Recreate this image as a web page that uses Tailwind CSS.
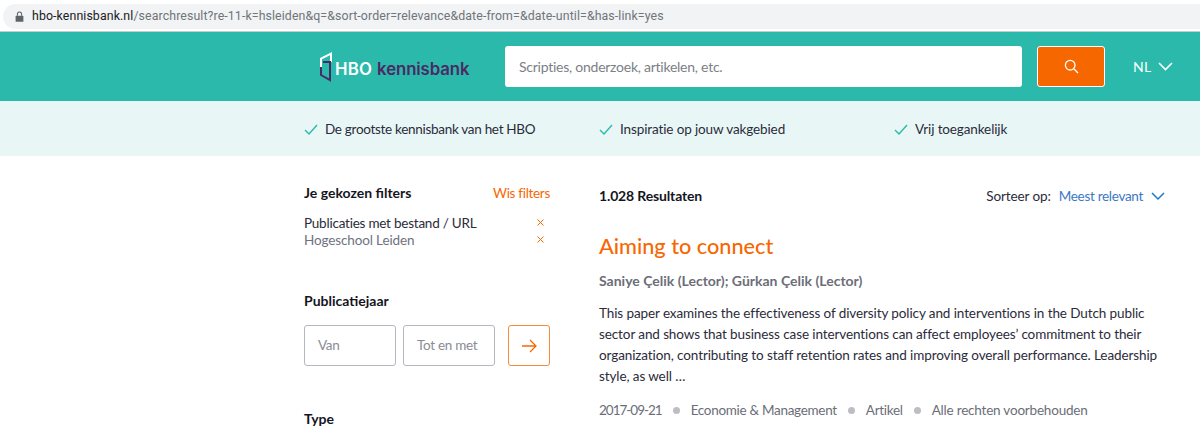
<!DOCTYPE html>
<html lang="nl">
<head>
  <meta charset="UTF-8">
  <title>HBO Kennisbank</title>
  <script src="https://cdn.jsdelivr.net/npm/@tailwindcss/browser@4"></script>
</head>
<body class="h-[440px] overflow-hidden bg-white font-['Lato',sans-serif] text-[13.5px] tracking-[-0.3px] text-[#2b2b3a]">

  <!-- Browser bar -->
  <div class="h-[32px] border-b border-[#c9cbcd] bg-white pl-[3px] pt-[4px]">
    <div class="flex h-[25px] items-center rounded-l-full bg-[#f1f3f4] pl-[11px] font-['Roboto',sans-serif] text-[12.35px] tracking-[0.1px]">
      <svg class="mr-[7px] h-[11px] w-[11px]" viewBox="0 0 13 13" fill="#5f6368">
        <path d="M2.5 5.5h8a.6.6 0 0 1 .6.6v6a.6.6 0 0 1-.6.6h-8a.6.6 0 0 1-.6-.6v-6a.6.6 0 0 1 .6-.6z"/>
        <path d="M4 5.5V3.6a2.5 2.5 0 0 1 5 0v1.9" fill="none" stroke="#5f6368" stroke-width="1.2"/>
      </svg>
      <span class="text-[#202124]">hbo-kennisbank.nl</span><span class="text-[#70757a]">/searchresult?re-11-k=hsleiden&amp;q=&amp;sort-order=relevance&amp;date-from=&amp;date-until=&amp;has-link=yes</span>
    </div>
  </div>

  <!-- Header -->
  <header class="flex h-[69px] items-center bg-[#2bb9ac] pl-[319px]">
    <div class="flex w-[186px] items-center">
      <svg class="h-[31px] w-[16px] shrink-0" viewBox="0 0 16 31" fill="none">
        <path d="M12 11V2.5L2 7.5V17" stroke="#fff" stroke-width="2"/>
        <path d="M4 11H11V29L2 24V16" stroke="#4a2a63" stroke-width="2"/>
      </svg>
      <span class="mt-[6px] font-['Inter',sans-serif] text-[16.8px] font-semibold leading-none tracking-[0.2px] text-white">HBO</span>
      <span class="mt-[6px] ml-[5px] font-['Inter',sans-serif] text-[16.8px] font-semibold leading-none tracking-[-0.1px] text-[#4a2a63]">kennisbank</span>
    </div>
    <div class="flex h-[41px] w-[517px] items-center rounded-[3px] bg-white pl-[14px] text-[14px] tracking-[-0.25px] text-[#7c7f86]">Scripties, onderzoek, artikelen, etc.</div>
    <button class="ml-[15px] flex h-[41px] w-[68px] items-center justify-center rounded-[3px] border border-white bg-[#f76700]">
      <svg class="h-[15px] w-[15px]" viewBox="0 0 15 15" fill="none" stroke="#fff" stroke-width="1.3">
        <circle cx="6.2" cy="6.2" r="4.8"/>
        <path d="M9.8 9.8L14 14"/>
      </svg>
    </button>
    <div class="ml-[28px] flex items-center text-[14px] tracking-[0.2px] text-white">
      NL
      <svg class="ml-[7px] h-[9px] w-[15px]" viewBox="0 0 15 9" fill="none" stroke="#fff" stroke-width="1.6">
        <path d="M1 1l6.5 6.5L14 1"/>
      </svg>
    </div>
  </header>

  <!-- USP bar -->
  <div class="flex h-[55px] items-center bg-[#e8f7f6] pl-[304px] pt-[2px]">
    <div class="flex w-[295px] items-center gap-[7px]">
      <svg class="h-[11px] w-[14px]" viewBox="0 0 14 11" fill="none" stroke="#2bb9ac" stroke-width="1.4"><path d="M1 6l4 4 8-9"/></svg>
      <span>De grootste kennisbank van het HBO</span>
    </div>
    <div class="flex w-[295px] items-center gap-[7px]">
      <svg class="h-[11px] w-[14px]" viewBox="0 0 14 11" fill="none" stroke="#2bb9ac" stroke-width="1.4"><path d="M1 6l4 4 8-9"/></svg>
      <span class="tracking-[-0.12px]">Inspiratie op jouw vakgebied</span>
    </div>
    <div class="flex items-center gap-[7px]">
      <svg class="h-[11px] w-[14px]" viewBox="0 0 14 11" fill="none" stroke="#2bb9ac" stroke-width="1.4"><path d="M1 6l4 4 8-9"/></svg>
      <span class="tracking-[-0.12px]">Vrij toegankelijk</span>
    </div>
  </div>

  <!-- Content -->
  <main class="flex pl-[304px]">
    <aside class="w-[246px] pt-[28px]">
      <div class="flex items-center justify-between leading-[18px]">
        <span class="text-[14px] font-bold tracking-normal text-[#15151f]">Je gekozen filters</span>
        <span class="text-[#f76700]">Wis filters</span>
      </div>
      <div class="mt-[13px] flex justify-between pr-[6px] leading-[17px]">
        <span class="tracking-[-0.23px]">Publicaties met bestand / URL</span>
        <svg class="mt-[4px] h-[7px] w-[7px]" viewBox="0 0 7 7" fill="none" stroke="#f76700"><path d="M.5.5l6 6M6.5.5l-6 6"/></svg>
      </div>
      <div class="flex justify-between pr-[6px] leading-[17px] text-[#6f7280]">
        <span class="tracking-[-0.13px]">Hogeschool Leiden</span>
        <svg class="mt-[4px] h-[7px] w-[7px]" viewBox="0 0 7 7" fill="none" stroke="#f76700"><path d="M.5.5l6 6M6.5.5l-6 6"/></svg>
      </div>

      <h3 class="mt-[43px] text-[14px] font-bold leading-[18px] tracking-normal text-[#15151f]">Publicatiejaar</h3>
      <div class="mt-[15px] flex">
        <div class="flex h-[41px] w-[92px] items-center rounded-[3px] border border-[#b5b7bf] pl-[13px] text-[#8a8c93]">Van</div>
        <div class="ml-[7px] flex h-[41px] w-[92px] items-center rounded-[3px] border border-[#b5b7bf] pl-[13px] text-[#8a8c93]">Tot en met</div>
        <button class="ml-[13px] flex h-[41px] w-[42px] items-center justify-center rounded-[3px] border border-[#f78a3c]">
          <svg class="h-[14px] w-[15px]" viewBox="0 0 15 14" fill="none" stroke="#f76700" stroke-width="1.3"><path d="M0 7h14M8 1l6 6-6 6"/></svg>
        </button>
      </div>
      <h3 class="mt-[44px] text-[14px] font-bold leading-[18px] tracking-normal text-[#15151f]">Type</h3>
    </aside>

    <section class="ml-[49px] w-[566px] pt-[31px]">
      <div class="flex items-center justify-between leading-[18px]">
        <span class="text-[14px] font-bold tracking-[-0.15px] text-[#15151f]">1.028 Resultaten</span>
        <div class="flex items-center">
          <span class="tracking-[-0.1px]">Sorteer op:</span>
          <span class="ml-[8px] text-[#3b78c4]">Meest relevant</span>
          <svg class="ml-[8px] h-[9px] w-[14px]" viewBox="0 0 14 9" fill="none" stroke="#2277c4" stroke-width="1.5"><path d="M1 1l6 6 6-6"/></svg>
        </div>
      </div>
      <h2 class="mt-[27px] text-[21.7px] font-medium leading-[28px] tracking-normal text-[#f76700]">Aiming to connect</h2>
      <p class="mt-[12px] text-[14px] font-bold leading-[18px] tracking-normal text-[#6b6e78]">Saniye Çelik (Lector); Gürkan Çelik (Lector)</p>
      <p class="mt-[13px] leading-[21px] tracking-[-0.1px]">This paper examines the effectiveness of diversity policy and interventions in the Dutch public sector and shows that business case interventions can affect employees’ commitment to their organization, contributing to staff retention rates and improving overall performance. Leadership style, as well …</p>
      <div class="mt-[14px] flex items-center leading-[18px] text-[#6b6e78]">
        <span class="tracking-[-1px]">2017-09-21</span>
        <span class="mx-[11px] h-[7px] w-[7px] rounded-full bg-[#bcbec4]"></span>
        <span>Economie &amp; Management</span>
        <span class="mx-[11px] h-[7px] w-[7px] rounded-full bg-[#bcbec4]"></span>
        <span>Artikel</span>
        <span class="mx-[11px] h-[7px] w-[7px] rounded-full bg-[#bcbec4]"></span>
        <span class="tracking-[-0.2px]">Alle rechten voorbehouden</span>
      </div>
    </section>
  </main>
</body>
</html>
